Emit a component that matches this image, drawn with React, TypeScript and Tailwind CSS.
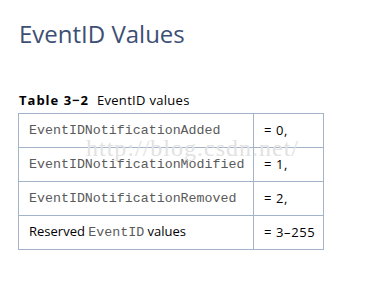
const rows: { name: React.ReactNode; value: string }[] = [
  { name: <code className="code">EventIDNotificationAdded</code>, value: "= 0," },
  { name: <code className="code">EventIDNotificationModified</code>, value: "= 1," },
  { name: <code className="code">EventIDNotificationRemoved</code>, value: "= 2," },
  {
    name: (
      <span>
        Reserved <code className="code">EventID</code> values
      </span>
    ),
    value: "= 3–255",
  },
];

export default function App() {
  return (
    <div className="relative w-[365px] h-[283px] bg-white font-['Open_Sans',sans-serif] overflow-hidden">
      <style>{`.code{font-family:"Liberation Mono",monospace;font-size:13.3px;color:#5a5a5a;}`}</style>
      <div className="pl-[19px] pt-[19px]">
        <h1 className="text-[24px] leading-[30px] text-[#3d4f74]">EventID Values</h1>
        <div className="mt-[43px] text-[13px] leading-[16px] text-black">
          <span className="font-bold tracking-[1px]">Table 3−2</span>
          <span className="ml-[8px] tracking-[0.3px]">EventID values</span>
        </div>
      </div>
      <table className="ml-[18px] mt-[5px] border-collapse text-[13px] text-black">
        <tbody>
          {rows.map((r, i) => (
            <tr key={i} className="h-[34px]">
              <td className="w-[235px] border border-[#a3b3c9] pl-[10px] align-middle">{r.name}</td>
              <td className="w-[70px] border border-[#a3b3c9] pl-[10px] align-middle tracking-[0.6px]">{r.value}</td>
            </tr>
          ))}
        </tbody>
      </table>
      <div className="absolute left-[86px] top-[134px] font-['Liberation_Serif',serif] text-[24px] leading-[28px] text-[#e2e2e2] tracking-[1px] pointer-events-none">
        http://blog.csdn.net/
      </div>
    </div>
  );
}
